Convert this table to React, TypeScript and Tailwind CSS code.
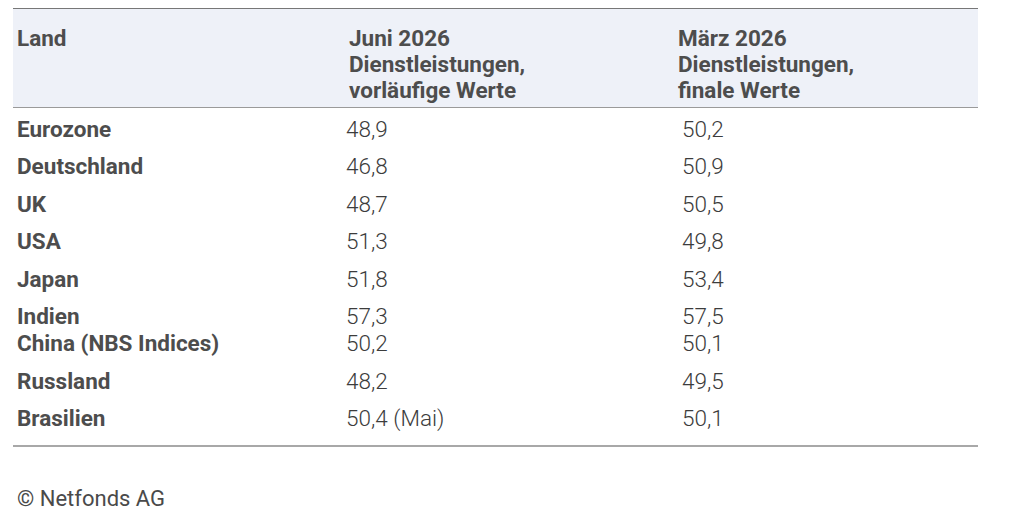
import React from 'react';

type Row = { land: string[]; juni: string[]; maerz: string[] };

const rows: Row[] = [
  { land: ['Eurozone'], juni: ['48,9'], maerz: ['50,2'] },
  { land: ['Deutschland'], juni: ['46,8'], maerz: ['50,9'] },
  { land: ['UK'], juni: ['48,7'], maerz: ['50,5'] },
  { land: ['USA'], juni: ['51,3'], maerz: ['49,8'] },
  { land: ['Japan'], juni: ['51,8'], maerz: ['53,4'] },
  { land: ['Indien', 'China (NBS Indices)'], juni: ['57,3', '50,2'], maerz: ['57,5', '50,1'] },
  { land: ['Russland'], juni: ['48,2'], maerz: ['49,5'] },
  { land: ['Brasilien'], juni: ['50,4 (Mai)'], maerz: ['50,1'] },
];

function Lines({ items }: { items: string[] }) {
  return (
    <>
      {items.map((t, i) => (
        <div key={i}>{t}</div>
      ))}
    </>
  );
}

export default function App() {
  return (
    <div
      className="min-h-screen bg-white pl-[13px] pt-[8px]"
      style={{ fontFamily: 'Roboto, "Liberation Sans", sans-serif' }}
    >
      <div className="w-[965px]">
        {/* Header */}
        <div className="border-t border-[#777777] border-b-[1.5px] border-b-[#9a9a9a] bg-[#eef1f8]">
          <div className="grid grid-cols-[332px_329px_1fr] pt-[16px] pb-[4px] text-[22.5px] font-bold leading-[26px] text-[#4d4d4d]">
            <div className="pl-[4px]">Land</div>
            <div className="pl-[4px]">
              Juni 2026
              <br />
              Dienstleistungen,
              <br />
              vorläufige Werte
            </div>
            <div className="pl-[4px]">
              März 2026
              <br />
              Dienstleistungen,
              <br />
              finale Werte
            </div>
          </div>
        </div>

        {/* Body */}
        <div className="border-b-2 border-[#a8a8a8] pt-[2.5px] pb-[7px] text-[22.5px] leading-[27px]">
          {rows.map((r, i) => (
            <div key={i} className="grid grid-cols-[329px_336px_1fr] pt-[5px] pb-[5.5px]">
              <div className="pl-[4px] font-bold text-[#4d4d4d]">
                <Lines items={r.land} />
              </div>
              <div className="pl-[4px] font-light text-[#3c3c3c]">
                <Lines items={r.juni} />
              </div>
              <div className="pl-[4px] font-light text-[#3c3c3c]">
                <Lines items={r.maerz} />
              </div>
            </div>
          ))}
        </div>

        {/* Footer */}
        <div className="pl-[4px] pt-[39px] text-[22px] leading-[26px] text-[#4a4a4a]">© Netfonds AG</div>
      </div>
    </div>
  );
}
